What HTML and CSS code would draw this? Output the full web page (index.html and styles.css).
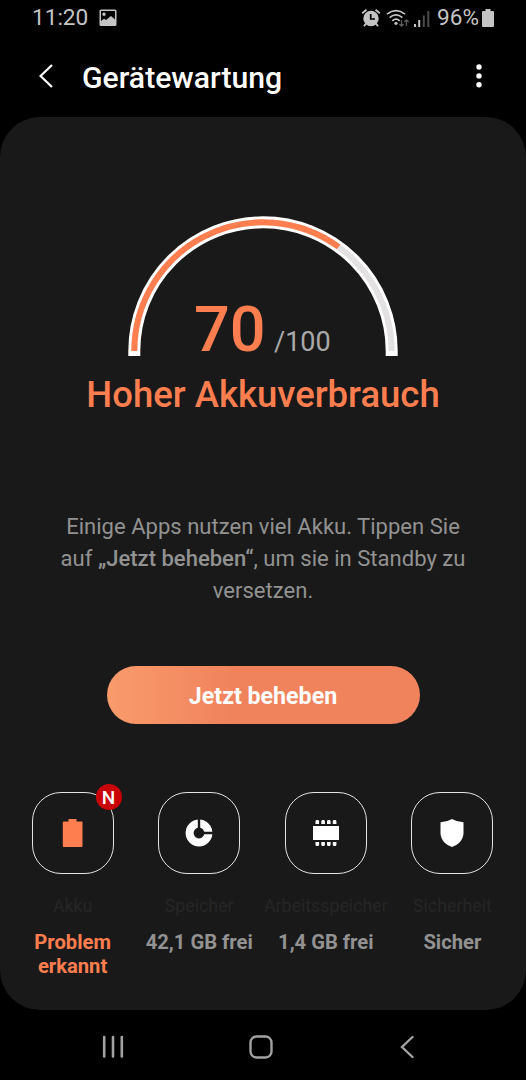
FILE: index.html
```html
<!DOCTYPE html>
<html lang="de">
<head>
<meta charset="utf-8">
<title>Gerätewartung</title>
<link rel="stylesheet" href="styles.css">
</head>
<body>
<div class="statusbar">
  <span class="clock">11:20</span>
  <svg class="pic" width="18" height="18" viewBox="0 0 18 18"><path fill="#c4c4c4" fill-rule="evenodd" d="M2 .5h14q1.500 0 1.500 1.500v13.500q0 1.500-1.500 1.500h-14Q.5 17 .5 15.500V2Q.5 .5 2 .5ZM2 2v10l3-2.300 2 1.400 5-4.100 4 3.500V2ZM5 3.600a1.700 1.700 0 1 1 0 3.400a1.700 1.700 0 1 1 0-3.400Z"/></svg>
  <svg class="alarm" width="20" height="20" viewBox="0 0 20 20"><circle cx="10" cy="10.500" r="7.700" fill="#c4c4c4"/><path d="M1.200 5.200 5.500 1.700M18.800 5.200 14.500 1.700M5 15.500 3 18.300M15 15.500 17 18.300" stroke="#c4c4c4" stroke-width="1.900" fill="none"/><path d="M9.700 6v5h4.300" stroke="#000" stroke-width="1.700" fill="none"/></svg>
  <svg class="wifi" width="24" height="19" viewBox="0 0 24 19"><g fill="none" stroke="#c4c4c4" stroke-width="1.700"><path d="M.9 5.200Q10 -1.800 19.100 5.200"/><path d="M3.600 8.600Q10 3.300 16.400 8.600"/><path d="M6.300 11.800Q10 8.300 13.700 11.800"/></g><circle cx="10" cy="14.300" r="1.600" fill="#c4c4c4"/><path d="M15.500 11v6M13.300 15l2.200 2.200 2.200-2.200M20.500 17v-6M18.300 13l2.200-2.200 2.200 2.200" fill="none" stroke="#5d5d5d" stroke-width="1.300"/></svg>
  <svg class="signal" width="16" height="17" viewBox="0 0 16 17"><path d="M0 14h2v3H0ZM4.200 10h2v7h-2Z" fill="#c4c4c4"/><path d="M8.800 5.500h2V17h-2ZM13.300 1h2v16h-2Z" fill="#4c4c4c"/></svg>
  <span class="percent">96%</span>
  <svg class="batt" width="12" height="18" viewBox="0 0 12 18"><path fill="#c4c4c4" d="M3.500 0h5v2h2.500q1 0 1 1v14q0 1-1 1H1q-1 0-1-1V3q0-1 1-1h2.500Z"/></svg>
</div>
<header class="appbar">
  <svg width="14" height="24" viewBox="0 0 14 24"><path d="M13 1 1.500 12 13 23" fill="none" stroke="#fff" stroke-width="2.200"/></svg>
  <h1>Gerätewartung</h1>
  <svg class="more" width="6" height="24" viewBox="0 0 6 24" fill="#fff"><circle cx="3" cy="3" r="2.700"/><circle cx="3" cy="11.900" r="2.700"/><circle cx="3" cy="20.700" r="2.700"/></svg>
</header>
<main class="card">
  <div class="gauge">
    <svg width="270" height="141" viewBox="0 0 270 141" fill="none">
      <path d="M6.300 140V135A128.700 128.700 0 0 1 263.700 135V140" stroke="#fff" stroke-width="12"/>
      <path d="M6.300 135A128.700 128.700 0 0 1 263.700 135" stroke="#e3e1e1" stroke-width="6"/>
      <path d="M6.300 135A128.700 128.700 0 0 1 210.650 30.880" stroke="#ff7e4f" stroke-width="6"/>
    </svg>
    <div class="score"><span class="value">70</span><span class="total">/100</span></div>
  </div>
  <h2>Hoher Akkuverbrauch</h2>
  <p class="hint">Einige Apps nutzen viel Akku. Tippen Sie<br>auf <b>„Jetzt beheben“</b>, um sie in Standby zu<br>versetzen.</p>
  <button class="fix">Jetzt beheben</button>
  <div class="tiles">
    <div class="tile">
      <div class="box"><svg width="28" height="28" viewBox="0 0 28 28"><path fill="#ff7e4f" d="M9.500 0h8v2.500h5q1 0 1 1V27q0 1-1 1H4.800q-1 0-1-1V3.500q0-1 1-1h4.700Z"/></svg><span class="badge">N</span></div>
      <span class="name">Akku</span><span class="state alert">Problem<br>erkannt</span>
    </div>
    <div class="tile">
      <div class="box"><svg width="28" height="28" viewBox="0 0 28 28"><circle cx="14" cy="14" r="9.400" fill="none" stroke="#fff" stroke-width="8"/><path d="M14 14V0M14 14h14" stroke="#191919" stroke-width="2.400"/></svg></div>
      <span class="name">Speicher</span><span class="state">42,1 GB frei</span>
    </div>
    <div class="tile">
      <div class="box"><svg width="28" height="28" viewBox="0 0 28 28" fill="#fff"><path d="M1 7h26v14H1Z"/><path d="M3.500 5V2l.8-1h2l.8 1v3ZM9.300 5V2l.8-1h2l.8 1v3ZM15 5V2l.8-1h2l.8 1v3ZM20.800 5V2l.8-1h2l.8 1v3ZM3.500 23v3l.8 1h2l.8-1v-3ZM9.300 23v3l.8 1h2l.8-1v-3ZM15 23v3l.8 1h2l.8-1v-3ZM20.800 23v3l.8 1h2l.8-1v-3Z"/></svg></div>
      <span class="name">Arbeitsspeicher</span><span class="state">1,4 GB frei</span>
    </div>
    <div class="tile">
      <div class="box"><svg width="28" height="28" viewBox="0 0 28 28"><path fill="#fff" d="M14 0Q19 3 25.500 3.200V14C25.500 21 20 26 14 28C8 26 2.500 21 2.500 14V3.200Q9 3 14 0Z"/></svg></div>
      <span class="name">Sicherheit</span><span class="state">Sicher</span>
    </div>
  </div>
</main>
<nav class="navbar">
  <svg width="22" height="24" viewBox="0 0 22 24"><path d="M2.200 2v19.500M11 2v19.500M19.800 2v19.500" stroke="#a2a2a2" stroke-width="2.600" stroke-linecap="round"/></svg>
  <svg class="home" width="24" height="24" viewBox="0 0 24 24"><rect x="1.500" y="1.500" width="21" height="21" rx="6" fill="none" stroke="#a2a2a2" stroke-width="2.400"/></svg>
  <svg width="14" height="24" viewBox="0 0 14 24"><path d="M12.500 2 2 12 12.500 22" fill="none" stroke="#a2a2a2" stroke-width="2.400" stroke-linecap="round"/></svg>
</nav>
</body>
</html>
```
FILE: styles.css
```css
* { box-sizing: border-box; }
body { margin: 0; width: 526px; height: 1080px; overflow: hidden; background: #000; color: #fff; font-family: Roboto, sans-serif; }
svg { display: block; flex: none; }
h1, h2, p { margin: 0; font-weight: 500; }
.statusbar { display: flex; align-items: center; height: 36px; padding: 0 32px 0 32px; color: #c4c4c4; font-size: 22.6px; line-height: 36px; white-space: nowrap; }
.clock { width: 67px; }
.alarm { margin-left: auto; }
.wifi { margin-left: 5px; }
.signal { margin-left: 4px; }
.percent { width: 42px; margin-left: 7px; }
.batt { margin-left: 3px; }
.appbar { display: flex; align-items: center; height: 81px; padding: 0 44px 2px 39px; }
.appbar h1 { margin: 4px 0 0 29px; font-size: 30.2px; line-height: 36px; }
.more { margin-left: auto; }
.card { display: flex; flex-direction: column; align-items: center; height: 893px; padding-top: 99px; border-radius: 40px; background: #191919; }
.gauge { display: grid; width: 270px; height: 141px; }
.gauge > * { grid-area: 1 / 1; }
.score { display: flex; align-self: end; align-items: baseline; margin-bottom: -10px; padding-left: 66px; line-height: 50px; white-space: nowrap; }
.value { width: 80px; color: #ff7e4f; font-size: 63px; font-weight: 500; }
.total { color: #a9a9a9; font-size: 27px; }
h2 { margin-top: 13px; color: #ff7e4f; font-size: 36.5px; line-height: 50px; white-space: nowrap; }
.hint { margin-top: 91px; color: #929292; font-size: 22.05px; font-weight: 400; line-height: 32px; text-align: center; white-space: nowrap; }
.hint b { font-weight: 500; }
.fix { width: 313px; height: 58px; margin-top: 59px; padding: 1px 0 0; border: 0; border-radius: 29px; background: linear-gradient(90deg, #f99b6c 0%, #f0835c 40%, #f0835c 100%); color: #fff; font: 700 23.2px Roboto, sans-serif; }
.tiles { display: grid; grid-template-columns: repeat(4, 126.6px); margin: 68px 1px 0 0; }
.tile { display: flex; flex-direction: column; align-items: center; white-space: nowrap; text-align: center; }
.box { position: relative; display: flex; align-items: center; justify-content: center; width: 82px; height: 82px; border: 1.5px solid #e4e4e4; border-radius: 29px; }
.badge { position: absolute; top: -9px; right: -9px; width: 26px; height: 26px; border-radius: 50%; background: #c90005; font-size: 19px; font-weight: 500; line-height: 27px; }
.name { margin-top: 20px; color: #262626; font-size: 17.8px; line-height: 24px; }
.state { margin-top: 12px; color: #929292; font-size: 20.2px; font-weight: 700; line-height: 24px; }
.alert { color: #ff7e4f; }
.navbar { display: flex; align-items: center; justify-content: space-between; height: 70px; padding: 4px 112px 0 102px; }
.home { margin-right: 3px; }
```
